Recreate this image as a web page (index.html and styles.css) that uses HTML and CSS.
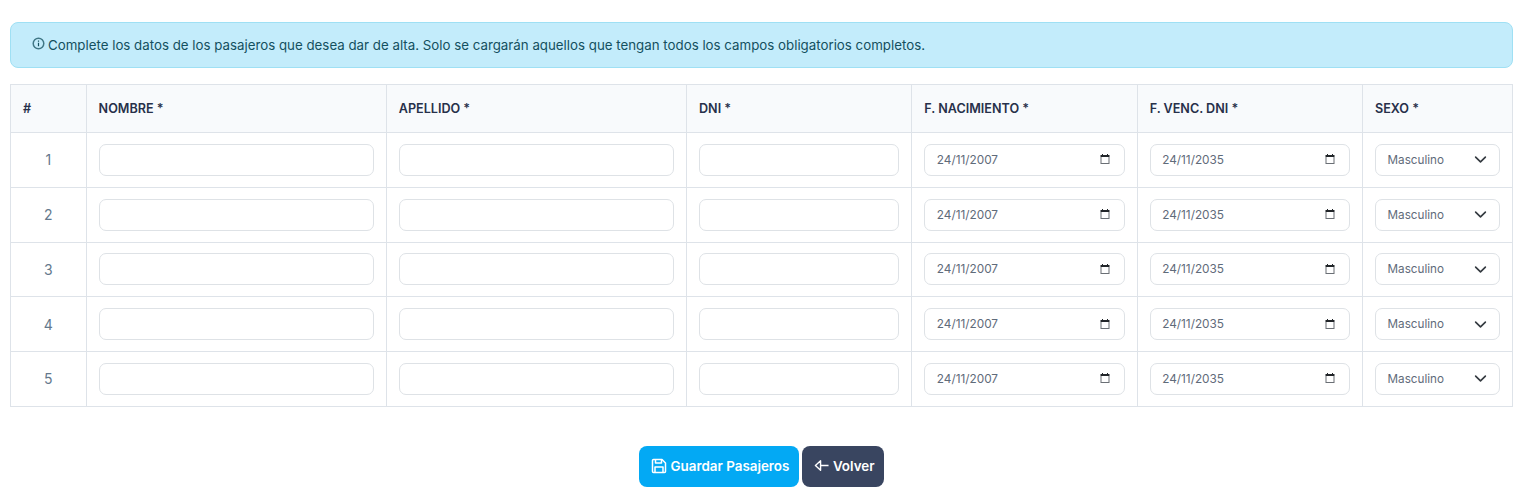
FILE: index.html
```html
<!DOCTYPE html>
<html lang="es">
<head>
<meta charset="utf-8">
<title>Alta de pasajeros</title>
<link rel="stylesheet" href="styles.css">
</head>
<body>
<svg class="sprites" aria-hidden="true">
  <symbol id="cal" viewBox="0 0 12 12"><path d="M3 1h1v1h4V1h1v1h1.500v2h-9V2H3z" fill="#212529"/><path d="M1.500 4h1v6h7V4h1v7h-9z" fill="#6a6f75"/></symbol>
  <symbol id="chev" viewBox="0 0 16 16"><path d="m2 5 6 6 6-6" fill="none" stroke="#343a40" stroke-width="2" stroke-linecap="round" stroke-linejoin="round"/></symbol>
</svg>
<main class="page">
  <div class="alert">
    <svg class="alert-icon" viewBox="0 0 14 14" width="13" height="13" fill="none" stroke="currentColor"><circle cx="7" cy="7" r="5.700" stroke-width="1.600" opacity=".75"/><path d="M7 6.200v3.800M7 3.800v1.200" stroke-width="1.300"/></svg>
    <span>Complete los datos de los pasajeros que desea dar de alta. Solo se cargarán aquellos que tengan todos los campos obligatorios completos.</span>
  </div>
  <table class="grid">
    <colgroup>
      <col class="c-n"><col class="c-text"><col class="c-text"><col class="c-dni"><col class="c-date"><col class="c-date"><col class="c-sex">
    </colgroup>
    <thead>
      <tr><th>#</th><th>NOMBRE *</th><th>APELLIDO *</th><th>DNI *</th><th>F. NACIMIENTO *</th><th>F. VENC. DNI *</th><th>SEXO *</th></tr>
    </thead>
    <tbody>
      <tr><td class="num">1</td><td><input class="field" type="text"></td><td><input class="field" type="text"></td><td><input class="field" type="text"></td>
        <td><div class="field date"><span>24/11/2007</span><svg class="cal"><use href="#cal"/></svg></div></td>
        <td><div class="field date"><span>24/11/2035</span><svg class="cal"><use href="#cal"/></svg></div></td>
        <td><div class="field sex"><span>Masculino</span><svg class="chev"><use href="#chev"/></svg></div></td></tr>
      <tr><td class="num">2</td><td><input class="field" type="text"></td><td><input class="field" type="text"></td><td><input class="field" type="text"></td>
        <td><div class="field date"><span>24/11/2007</span><svg class="cal"><use href="#cal"/></svg></div></td>
        <td><div class="field date"><span>24/11/2035</span><svg class="cal"><use href="#cal"/></svg></div></td>
        <td><div class="field sex"><span>Masculino</span><svg class="chev"><use href="#chev"/></svg></div></td></tr>
      <tr><td class="num">3</td><td><input class="field" type="text"></td><td><input class="field" type="text"></td><td><input class="field" type="text"></td>
        <td><div class="field date"><span>24/11/2007</span><svg class="cal"><use href="#cal"/></svg></div></td>
        <td><div class="field date"><span>24/11/2035</span><svg class="cal"><use href="#cal"/></svg></div></td>
        <td><div class="field sex"><span>Masculino</span><svg class="chev"><use href="#chev"/></svg></div></td></tr>
      <tr><td class="num">4</td><td><input class="field" type="text"></td><td><input class="field" type="text"></td><td><input class="field" type="text"></td>
        <td><div class="field date"><span>24/11/2007</span><svg class="cal"><use href="#cal"/></svg></div></td>
        <td><div class="field date"><span>24/11/2035</span><svg class="cal"><use href="#cal"/></svg></div></td>
        <td><div class="field sex"><span>Masculino</span><svg class="chev"><use href="#chev"/></svg></div></td></tr>
      <tr><td class="num">5</td><td><input class="field" type="text"></td><td><input class="field" type="text"></td><td><input class="field" type="text"></td>
        <td><div class="field date"><span>24/11/2007</span><svg class="cal"><use href="#cal"/></svg></div></td>
        <td><div class="field date"><span>24/11/2035</span><svg class="cal"><use href="#cal"/></svg></div></td>
        <td><div class="field sex"><span>Masculino</span><svg class="chev"><use href="#chev"/></svg></div></td></tr>
    </tbody>
  </table>
  <div class="actions">
    <button class="btn btn-primary" type="button">
      <svg viewBox="0 0 16 16" width="16" height="16" fill="none" stroke="currentColor" stroke-width="1.500" stroke-linejoin="round"><path d="M1.500 2.500a1 1 0 0 1 1-1h8.500l3.500 3.500v8.500a1 1 0 0 1-1 1h-11a1 1 0 0 1-1-1z"/><path d="M4.500 1.500v3.500h6v-3.500M4 14.500v-5.500h8v5.500"/></svg>
      Guardar Pasajeros</button>
    <button class="btn btn-dark" type="button">
      <svg viewBox="0 0 16 16" width="15" height="15" fill="none" stroke="currentColor" stroke-width="1.500" stroke-linejoin="round"><path d="M7 3 1.500 8 7 13V3zM7 8h8.500"/></svg>
      Volver</button>
  </div>
</main>
</body>
</html>
```

FILE: styles.css
```css
* { box-sizing: border-box; }
body {
  margin: 0;
  background: #fff;
  font-family: "Inter", "Liberation Sans", sans-serif;
  font-size: 11.800px;
  color: #1f2a44;
}
.sprites { display: none; }
.page { padding: 22px 18px 11px 10px; }
.alert {
  display: flex;
  align-items: center;
  gap: 3px;
  height: 46px;
  padding: 0 21px;
  background: #c3ecfb;
  border: 1px solid #9fe0f4;
  border-radius: 8px;
  color: #14505f;
  font-size: 13.300px;
}
.alert-icon { flex: none; margin-top: -3px; }
.grid {
  width: 1502.500px;
  margin-top: 16px;
  border-collapse: collapse;
  table-layout: fixed;
}
.c-n { width: 75.600px; }
.c-text { width: 300.200px; }
.c-dni { width: 225.300px; }
.c-date { width: 225.400px; }
.c-sex { width: 150.400px; }
.grid th, .grid td { border: 1px solid #dee3e9; padding: 0 12px; }
.grid th {
  height: 48px;
  background: #f8fafc;
  text-align: left;
  font-size: 12.600px;
  font-weight: 600;
  color: #27304a;
}
.grid td { height: 54.760px; }
.grid td.num { text-align: center; font-size: 14px; color: #64788c; }
.field {
  display: flex;
  align-items: center;
  justify-content: space-between;
  width: 100%;
  height: 32px;
  padding: 0 12px 0 11.500px;
  background: #fff;
  border: 1px solid #dee2e6;
  border-radius: 7px;
  font: inherit;
  color: #5f6b7a;
}
.date { padding-right: 13px; }
.cal { flex: none; width: 12px; height: 12px; margin-top: -1px; }
.chev { flex: none; width: 13px; height: 13px; }
.sex { font-size: 11.700px; }
.actions {
  display: flex;
  justify-content: center;
  gap: 3px;
  margin-top: 39px;
}
.btn {
  display: flex;
  align-items: center;
  gap: 4px;
  height: 41px;
  padding: 0 9.500px 1px 12px;
  border: 0;
  border-radius: 8px;
  color: #fff;
  font: 600 13.400px "Inter", "Liberation Sans", sans-serif;
}
.btn-primary { background: #03a9f4; }
.btn-dark { background: #394560; padding-right: 10px; }
```
